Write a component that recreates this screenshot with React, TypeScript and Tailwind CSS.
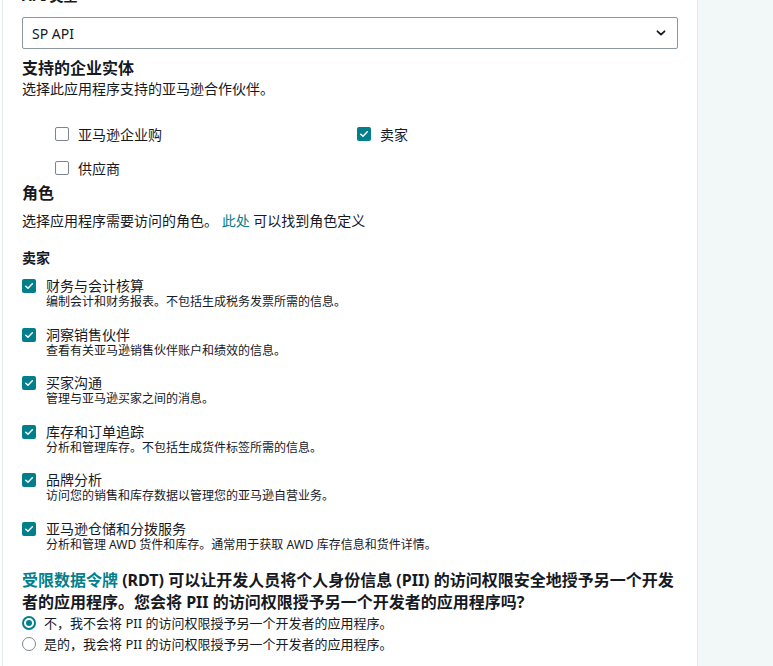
import React, { useState } from 'react';

const TEAL = '#037f8c';

const Checkbox = ({ checked }: { checked: boolean }) =>
  checked ? (
    <span className="flex h-[14px] w-[14px] shrink-0 items-center justify-center rounded-[2px] bg-[#037f8c]">
      <svg width="10" height="10" viewBox="0 0 10 10" fill="none">
        <path d="M1.8 5.2 L4 7.3 L8.3 2.8" stroke="#fff" strokeWidth="1.5" strokeLinecap="round" strokeLinejoin="round" />
      </svg>
    </span>
  ) : (
    <span className="h-[14px] w-[14px] shrink-0 rounded-[2px] border border-[#7d8590] bg-white" />
  );

const Radio = ({ checked }: { checked: boolean }) =>
  checked ? (
    <span className="flex h-[14px] w-[14px] shrink-0 items-center justify-center rounded-full border-2 border-[#037f8c] bg-white">
      <span className="h-[6px] w-[6px] rounded-full bg-[#037f8c]" />
    </span>
  ) : (
    <span className="h-[14px] w-[14px] shrink-0 rounded-full border border-[#7d8590] bg-white" />
  );

const roles = [
  { title: '财务与会计核算', desc: '编制会计和财务报表。不包括生成税务发票所需的信息。' },
  { title: '洞察销售伙伴', desc: '查看有关亚马逊销售伙伴账户和绩效的信息。' },
  { title: '买家沟通', desc: '管理与亚马逊买家之间的消息。' },
  { title: '库存和订单追踪', desc: '分析和管理库存。不包括生成货件标签所需的信息。' },
  { title: '品牌分析', desc: '访问您的销售和库存数据以管理您的亚马逊自营业务。' },
  { title: '亚马逊仓储和分拨服务', desc: '分析和管理 AWD 货件和库存。通常用于获取 AWD 库存信息和货件详情。' },
];

const App: React.FC = () => {
  const [sharePii, setSharePii] = useState(false);

  return (
    <div
      className="flex h-[666px] overflow-hidden bg-white text-[#16191f]"
      style={{ fontFamily: '"Noto Sans", "Noto Sans CJK SC", sans-serif' }}
    >
      <div className="ml-[2px] flex-1 border-l border-[#e6ecee] pl-[19px] pr-[19px]">
        <div className="-mt-[14px] flex flex-col">
          <div className="h-[20px] text-[14px] font-bold leading-[20px]">API 类型</div>

          {/* select */}
          <div className="mt-[11px] flex h-[32px] items-center justify-between rounded-[2px] border border-[#8b96a0] pl-[9px] pr-[10px]">
            <span className="text-[14px]">SP API</span>
            <svg width="12" height="12" viewBox="0 0 12 12" fill="none">
              <path d="M2.5 4.3 L6 7.6 L9.5 4.3" stroke="#16191f" strokeWidth="1.8" strokeLinecap="round" strokeLinejoin="round" />
            </svg>
          </div>

          {/* entities */}
          <div className="mt-[8px] text-[16px] font-bold leading-[22px]">支持的企业实体</div>
          <div className="text-[14px] leading-[20px]">选择此应用程序支持的亚马逊合作伙伴。</div>

          <div className="mt-[25px] grid grid-cols-[302px_302px] gap-y-[14px] pl-[33px]">
            <label className="flex h-[20px] items-center gap-[9px] text-[14px]">
              <Checkbox checked={false} /> 亚马逊企业购
            </label>
            <label className="flex h-[20px] items-center gap-[9px] text-[14px]">
              <Checkbox checked /> 卖家
            </label>
            <label className="flex h-[20px] items-center gap-[9px] text-[14px]">
              <Checkbox checked={false} /> 供应商
            </label>
          </div>

          {/* roles */}
          <div className="mt-[4px] text-[16px] font-bold leading-[22px]">角色</div>
          <div className="mt-[7px] text-[14px] leading-[20px]">
            选择应用程序需要访问的角色。 <a className="text-[#037f8c]">此处</a> 可以找到角色定义
          </div>

          <div className="mt-[17px] text-[14px] font-bold leading-[20px]">卖家</div>

          <div className="mt-[10px] flex flex-col gap-[17.6px]">
            {roles.map(r => (
              <div key={r.title} className="flex items-start gap-[10px]">
                <span className="mt-[1px]"><Checkbox checked /></span>
                <div>
                  <div className="text-[14px] leading-[16px]">{r.title}</div>
                  <div className="text-[12px] leading-[15px]">{r.desc}</div>
                </div>
              </div>
            ))}
          </div>

          {/* RDT */}
          <div className="mt-[17px] whitespace-nowrap text-[16px] font-bold leading-[22px]">
            <a style={{ color: TEAL }}>受限数据令牌</a> (RDT) 可以让开发人员将个人身份信息 (PII) 的访问权限安全地授予另一个开发
            <br />
            者的应用程序。您会将 PII 的访问权限授予另一个开发者的应用程序吗?
          </div>
          <div className="flex flex-col">
            <label className="flex h-[21px] items-center gap-[8px] text-[13px]" onClick={() => setSharePii(false)}>
              <Radio checked={!sharePii} /> 不，我不会将 PII 的访问权限授予另一个开发者的应用程序。
            </label>
            <label className="flex h-[21px] items-center gap-[8px] text-[13px]" onClick={() => setSharePii(true)}>
              <Radio checked={sharePii} /> 是的，我会将 PII 的访问权限授予另一个开发者的应用程序。
            </label>
          </div>
        </div>
      </div>
      <div className="w-[76px] shrink-0 border-l border-[#e2eaeb] bg-[#f2f7f8]" />
    </div>
  );
};

export default App;
